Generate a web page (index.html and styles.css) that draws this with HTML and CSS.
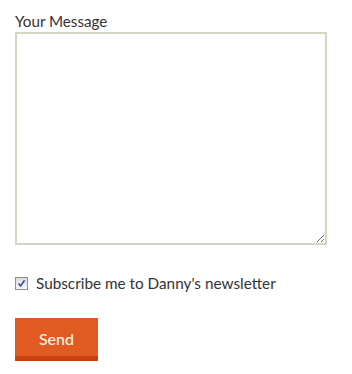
FILE: index.html
```html
<!DOCTYPE html>
<html>
<head>
<meta charset="utf-8">
<link rel="stylesheet" href="styles.css">
</head>
<body>
<form class="form">
  <label class="label" for="msg">Your Message</label>
  <textarea id="msg" class="message"></textarea>
  <label class="check-row">
    <span class="checkbox">
      <svg width="9" height="9" viewBox="0 0 9 9"><path d="M1.5 4.5 L3.6 7 L7.6 1.2" fill="none" stroke="#3a4fa0" stroke-width="1.6"/></svg>
    </span>
    <span class="check-text">Subscribe me to Danny's newsletter</span>
  </label>
  <button type="button" class="send">Send</button>
</form>
</body>
</html>
```
FILE: styles.css
```css
html, body { margin: 0; padding: 0; background: #fff; }
body { font-family: "Lato", "Open Sans", sans-serif; color: #333; }
.form { display: flex; flex-direction: column; align-items: flex-start; padding: 11px 15px 0 15px; }
.label { font-size: 15.2px; line-height: 20px; color: #333; }
.message {
  box-sizing: border-box;
  margin-top: 1px;
  width: 312px;
  height: 213px;
  border: 2px solid #d5d5c3;
  background: #fff;
  padding: 0;
  outline: none;
}
.check-row { display: flex; align-items: center; margin-top: 30px; gap: 8px; height: 16px; }
.checkbox {
  box-sizing: border-box;
  width: 13px; height: 13px;
  border: 1px solid #8e8f8f;
  background: linear-gradient(#dcdcdc, #f6f6f6);
  display: flex; align-items: center; justify-content: center;
}
.check-text { font-size: 15.3px; color: #333; }
.send {
  margin-top: 27px;
  box-sizing: border-box;
  width: 83px; height: 43px;
  border: 0;
  border-bottom: 5px solid #c8420f;
  background: #e05a22;
  color: #fff3e6;
  font-family: "Lato", "Open Sans", sans-serif;
  font-size: 16px;
  font-weight: 500;
  padding: 2px 0 0 0;
}
```
